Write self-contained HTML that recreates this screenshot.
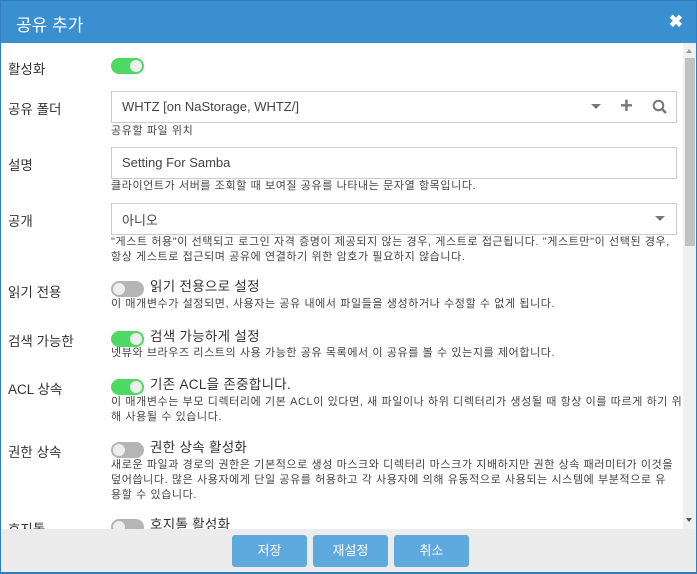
<!DOCTYPE html><html><head><meta charset="utf-8"><style>
*{box-sizing:border-box;margin:0;padding:0}
body{width:697px;height:574px;overflow:hidden;background:#fff;font-family:"Liberation Sans","Noto Sans CJK KR",sans-serif;color:#333;position:relative}
.frame{position:absolute;inset:0;border:1px solid #2f7fc0;border-bottom:2px solid #2f7fc0}
.hdr{position:absolute;left:0;top:0;width:697px;height:43px;background:#3a8fd0;color:#fff;font-size:17px;padding:11px 0 0 16px}
.x{position:absolute;right:14px;top:12px;font-size:17px;font-weight:bold}
.a{position:absolute;white-space:nowrap}
.l{left:8px;font-size:13.5px;color:#333}
.d{left:111px;font-size:11px;letter-spacing:0.6px;color:#444;line-height:15px}
.in{position:absolute;left:111px;width:566px;height:32px;border:1px solid #ccc;font-size:13px;padding:7px 10px;color:#444}
.tg{position:absolute;left:111px;width:33px;height:16px;border-radius:8px;background:#4cd964}
.tg::after{content:"";position:absolute;right:2px;top:2px;width:12px;height:12px;border-radius:50%;background:#eee}
.tg.off{background:#b5b5b5}.tg.off::after{left:2px;right:auto}
.tt{left:150px;font-size:13.5px;letter-spacing:0.3px;line-height:16px}
.car{position:absolute;width:0;height:0;border-left:5px solid transparent;border-right:5px solid transparent;border-top:5px solid #777}
.sb{position:absolute;left:683px;top:43px;width:14px;height:486px;background:#f0f0f0}
.th{position:absolute;left:685px;top:58px;width:10px;height:188px;background:#c1c1c1}
.ft{position:absolute;left:1px;top:529px;width:695px;height:43px;background:#ececec}
.b{position:absolute;top:535px;width:75px;height:32px;background:#5ea9de;border-radius:3px;color:#fff;font-size:13px;text-align:center;line-height:32px}
</style></head><body>
<div class="hdr">공유 추가<span class="x">✖</span></div>
<div class="a l" style="top:58px">활성화</div><div class="tg" style="top:58px"></div>
<div class="a l" style="top:98px">공유 폴더</div>
<div class="in" style="top:91px">WHTZ [on NaStorage, WHTZ/]</div>
<div class="car" style="left:591px;top:104px"></div>
<div class="a" style="left:620px;top:93px;font-size:22px;font-weight:bold;color:#777">+</div>
<svg class="a" style="left:652px;top:99px" width="16" height="16"><circle cx="6.5" cy="6.5" r="4.8" fill="none" stroke="#777" stroke-width="2"/><path d="M10 10l4 4" stroke="#777" stroke-width="2.5"/></svg>
<div class="a d" style="top:124px">공유할 파일 위치</div>
<div class="a l" style="top:154px">설명</div>
<div class="in" style="top:147px">Setting For Samba</div>
<div class="a d" style="top:179px">클라이언트가 서버를 조회할 때 보여질 공유를 나타내는 문자열 항목입니다.</div>
<div class="a l" style="top:210px">공개</div>
<div class="in" style="top:203px;padding-top:6px">아니오</div>
<div class="car" style="left:655px;top:216px"></div>
<div class="a d" style="top:235px">"게스트 허용"이 선택되고 로그인 자격 증명이 제공되지 않는 경우, 게스트로 접근됩니다. "게스트만"이 선택된 경우,<br>항상 게스트로 접근되며 공유에 연결하기 위한 암호가 필요하지 않습니다.</div>
<div class="a l" style="top:281px">읽기 전용</div><div class="tg off" style="top:281px"></div><div class="a tt" style="top:279px">읽기 전용으로 설정</div>
<div class="a d" style="top:297px">이 매개변수가 설정되면, 사용자는 공유 내에서 파일들을 생성하거나 수정할 수 없게 됩니다.</div>
<div class="a l" style="top:330px">검색 가능한</div><div class="tg" style="top:331px"></div><div class="a tt" style="top:329px">검색 가능하게 설정</div>
<div class="a d" style="top:346px">넷뷰와 브라우즈 리스트의 사용 가능한 공유 목록에서 이 공유를 볼 수 있는지를 제어합니다.</div>
<div class="a l" style="top:378px">ACL 상속</div><div class="tg" style="top:379px"></div><div class="a tt" style="top:377px">기존 ACL을 존중합니다.</div>
<div class="a d" style="top:395px">이 매개변수는 부모 디렉터리에 기본 ACL이 있다면, 새 파일이나 하위 디렉터리가 생성될 때 항상 이를 따르게 하기 위<br>해 사용될 수 있습니다.</div>
<div class="a l" style="top:441px">권한 상속</div><div class="tg off" style="top:442px"></div><div class="a tt" style="top:440px">권한 상속 활성화</div>
<div class="a d" style="top:458px">새로운 파일과 경로의 권한은 기본적으로 생성 마스크와 디렉터리 마스크가 지배하지만 권한 상속 패러미터가 이것을<br>덮어씁니다. 많은 사용자에게 단일 공유를 허용하고 각 사용자에 의해 유동적으로 사용되는 시스템에 부분적으로 유<br>용할 수 있습니다.</div>
<div class="a l" style="top:518px">호지톨</div><div class="tg off" style="top:519px"></div><div class="a tt" style="top:517px">호지톨 활성화</div>
<div class="sb"></div><div class="th"></div>
<div class="car" style="left:686px;top:49px;border-top:0;border-bottom:4px solid #999;border-left-width:3px;border-right-width:3px"></div>
<div class="car" style="left:686px;top:518px;border-top:4px solid #555;border-left-width:3px;border-right-width:3px"></div>
<div class="ft"></div>
<div class="b" style="left:232px">저장</div><div class="b" style="left:313px">재설정</div><div class="b" style="left:394px">취소</div>
<div class="frame"></div>
</body></html>
